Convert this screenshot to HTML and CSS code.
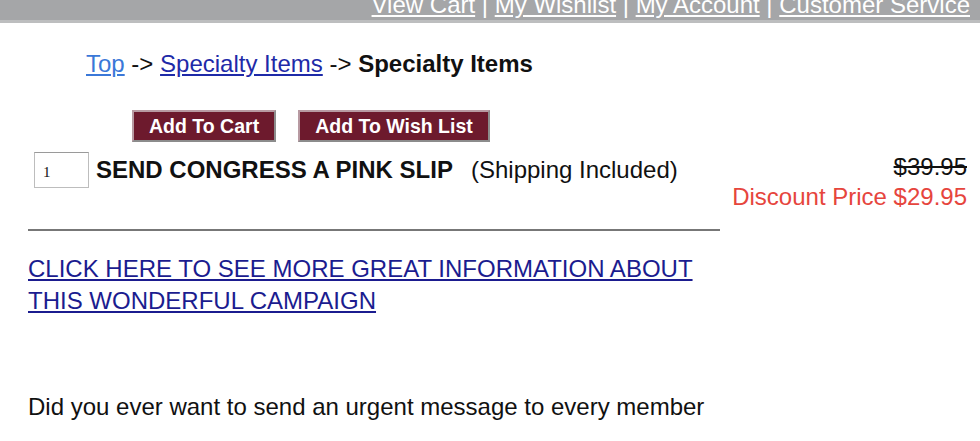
FILE: index.html
```html
<!DOCTYPE html>
<html lang="en">
<head>
	<meta charset="utf-8">
	<title>Specialty Items</title>
	<link rel="stylesheet" href="styles.css">
</head>
<body>

	<div class="topbar">
		<div class="toplinks">
			<a href="#">View Cart</a> | <a href="#">My Wishlist</a> | <a href="#">My Account</a> | <a href="#">Customer Service</a>
		</div>
	</div>

	<div class="crumbs">
		<a href="#" class="crumb-top">Top</a> -&gt; <a href="#">Specialty Items</a> -&gt; <b>Specialty Items</b>
	</div>

	<div class="actions">
		<button class="btn">Add To Cart</button>
		<button class="btn">Add To Wish List</button>
	</div>

	<div class="product">
		<div class="product-left">
			<input class="qty" type="text" value="1">
			<span class="product-name">SEND CONGRESS A PINK SLIP</span>
			<span class="shipping">(Shipping Included)</span>
		</div>
		<div class="prices">
			<div class="old-price">$39.95</div>
			<div class="new-price">Discount Price $29.95</div>
		</div>
	</div>

	<div class="content">
		<div class="rule"></div>

		<a href="#" class="more">CLICK HERE TO SEE MORE GREAT INFORMATION ABOUT THIS WONDERFUL CAMPAIGN</a>

		<p class="intro">Did you ever want to send an urgent message to every member of Congress? Now you can, with a pink slip that says it all.</p>
	</div>

</body>
</html>
```

FILE: styles.css
```css
body {
	margin: 0;
	font-family: "Liberation Sans", Arial, sans-serif;
	font-size: 24px;
	color: #111;
}

.topbar {
	height: 20px;
	background: #a5a6a8;
	border-bottom: 3px solid #bdbebf;
	overflow: hidden;
	text-align: right;
	padding-right: 10px;
}

.toplinks {
	margin-top: -7px;
	line-height: 24px;
	color: #fff;
}

.toplinks a {
	color: #fff;
}

.crumbs {
	margin: 27px 0 0 86px;
	line-height: 28px;
}

.crumbs a {
	color: #1e2aa8;
}

.crumbs .crumb-top {
	color: #3a78d8;
}

.actions {
	display: flex;
	gap: 22px;
	margin: 32px 0 0 132px;
}

.btn {
	height: 32px;
	padding: 0 15px;
	background: #6d1a2d;
	color: #fff;
	font-family: "Liberation Sans", Arial, sans-serif;
	font-weight: bold;
	font-size: 19.5px;
	border: 2px solid;
	border-color: #b89aa2 #8c8c8c #8c8c8c #b89aa2;
}

.product {
	display: flex;
	align-items: flex-start;
	margin-top: 10px;
	padding: 0 13px 0 34px;
}

.product-left {
	display: flex;
	align-items: center;
}

.qty {
	width: 55px;
	height: 36px;
	box-sizing: border-box;
	border: 1px solid #bdbdbd;
	border-top-color: #9a9a9a;
	padding: 4px 8px 0;
	font-family: "Liberation Serif", serif;
	font-size: 15px;
	color: #111;
}

.product-name {
	margin-left: 7px;
	font-weight: bold;
}

.shipping {
	margin-left: 18px;
}

.prices {
	margin-left: auto;
	text-align: right;
	line-height: 30px;
}

.old-price {
	text-decoration: line-through;
}

.new-price {
	color: #e6453d;
}

.content {
	width: 692px;
	margin-left: 28px;
}

.rule {
	margin-top: 17px;
	border-top: 2px solid #777;
}

.more {
	display: block;
	margin-top: 22px;
	line-height: 32px;
	color: #1b1c8f;
}

.intro {
	margin: 67px 0 0;
	line-height: 46px;
}
```
